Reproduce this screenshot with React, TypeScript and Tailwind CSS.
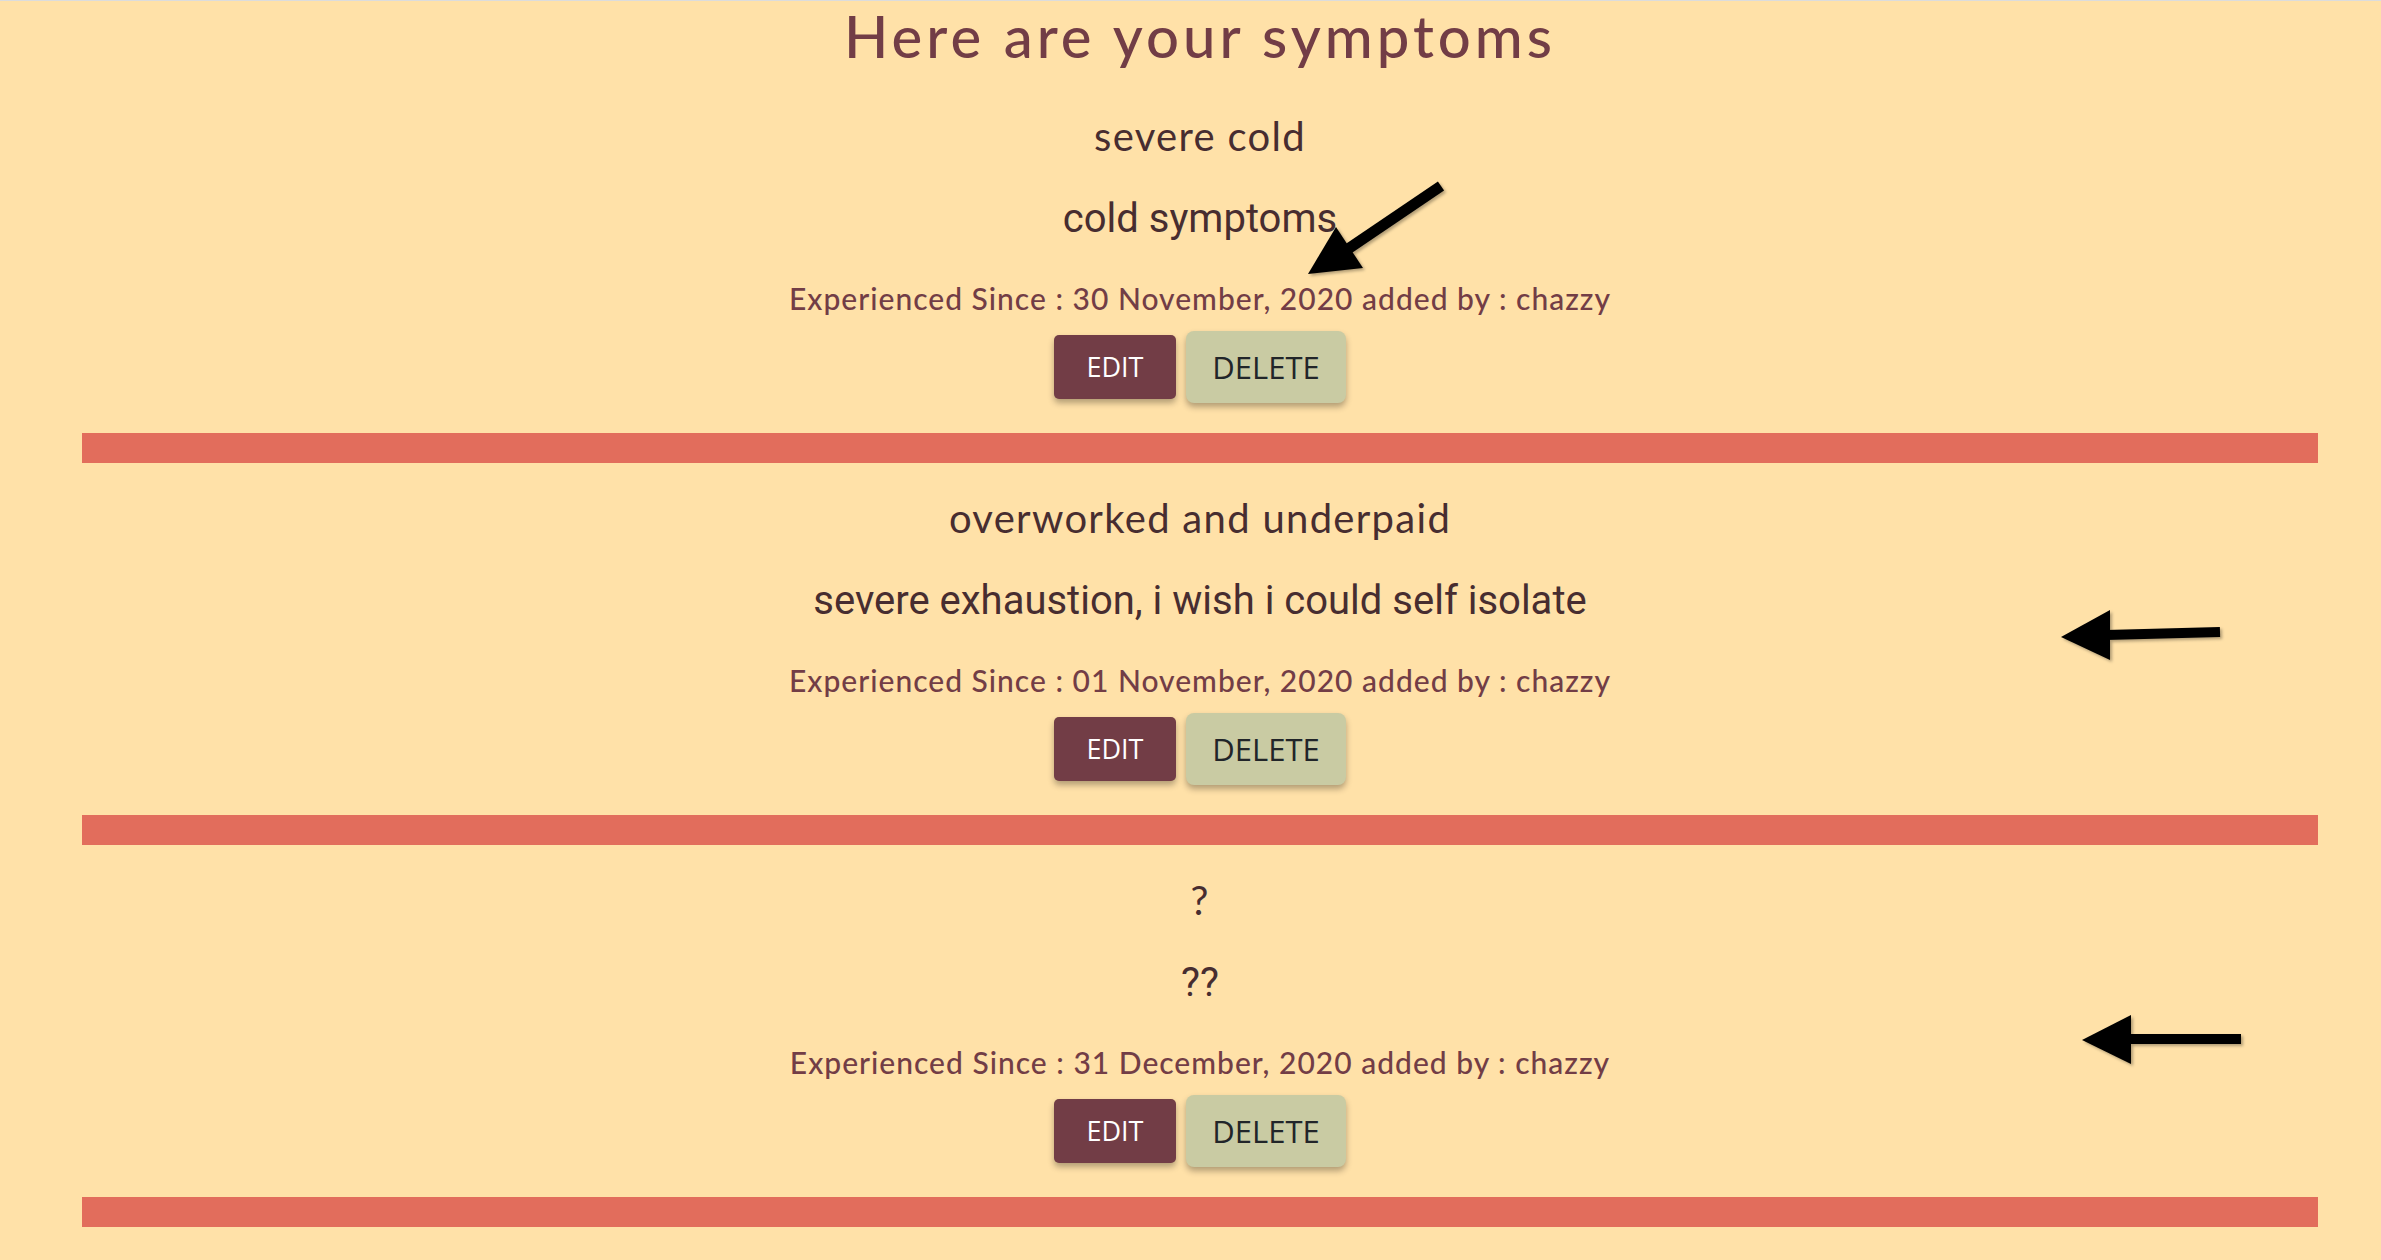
import React from "react";

type Symptom = { title: string; desc: string; date: string; user: string };

const symptoms: Symptom[] = [
  { title: "severe cold", desc: "cold symptoms", date: "30 November, 2020", user: "chazzy" },
  { title: "overworked and underpaid", desc: "severe exhaustion, i wish i could self isolate", date: "01 November, 2020", user: "chazzy" },
  { title: "?", desc: "??", date: "31 December, 2020", user: "chazzy" },
];

function Card({ s }: { s: Symptom }) {
  return (
    <div className="flex flex-col items-center pt-[30px]">
      <div className="h-[50px] leading-[50px] text-[40px] tracking-[1.3px] text-[#472d30] [font-family:Lato,'Noto_Sans',sans-serif]">
        {s.title}
      </div>
      <div className="mt-[33px] h-[50px] leading-[50px] text-[40px] text-[#472d30] [font-family:Roboto,sans-serif]">
        {s.desc}
      </div>
      <div className="mt-[34px] h-[40px] leading-[40px] text-[30px] tracking-[1px] font-medium text-[#723d46] [font-family:Lato,sans-serif]">
        Experienced Since : {s.date} added by : {s.user}
      </div>
      <div className="mt-[13px] h-[72px] flex items-center gap-[10px] [font-family:'Open_Sans',sans-serif]">
        <button className="w-[122px] h-[64px] rounded-[5px] bg-[#723d46] text-white text-[27px] shadow-[0_4px_6px_rgba(0,0,0,0.3)]">
          EDIT
        </button>
        <button className="w-[160px] h-[72px] rounded-[8px] bg-[#c9cba3] text-[#212529] text-[31px] shadow-[0_4px_6px_rgba(0,0,0,0.3)]">
          DELETE
        </button>
      </div>
      <div className="mt-[30px] h-[30px] w-full bg-[#e26d5c]" />
    </div>
  );
}

export default function App() {
  return (
    <div className="relative w-[2381px] h-[1260px] bg-[#ffe1a8] border-t border-[#dcdcdc] overflow-hidden">
      <div className="ml-[82px] w-[2236px] flex flex-col">
        <h1 className="leading-[70px] text-center text-[58px] tracking-[4px] font-medium text-[#723d46] [font-family:Lato,sans-serif] mb-[10px]">
          Here are your symptoms
        </h1>
        {symptoms.map((s, i) => (
          <Card key={i} s={s} />
        ))}
      </div>
      <svg className="absolute left-0 top-0 pointer-events-none" width="2381" height="1260">
        <defs>
          <filter id="sh" x="-20%" y="-20%" width="140%" height="140%">
            <feDropShadow dx="2" dy="2" stdDeviation="1.5" floodColor="#000" floodOpacity="0.3" />
          </filter>
        </defs>
        <g filter="url(#sh)" fill="#000">
          <line x1="1441" y1="185" x2="1345" y2="250" stroke="#000" strokeWidth="11" />
          <polygon points="1308,273 1336,226 1363,267" />
          <line x1="2220" y1="631" x2="2106" y2="634" stroke="#000" strokeWidth="10" />
          <polygon points="2061,636 2110,609 2110,659" />
          <line x1="2241" y1="1038" x2="2127" y2="1038" stroke="#000" strokeWidth="10" />
          <polygon points="2082,1039 2131,1014 2131,1063" />
        </g>
      </svg>
    </div>
  );
}
